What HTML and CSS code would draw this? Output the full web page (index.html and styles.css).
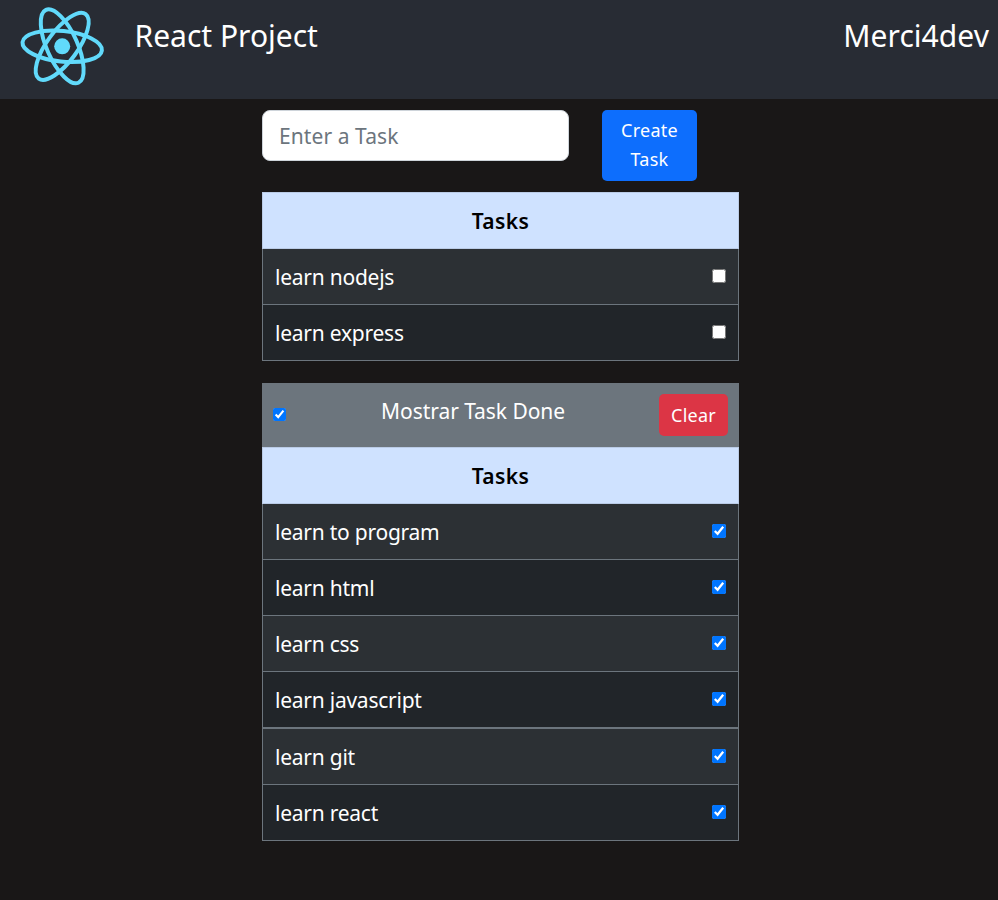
FILE: index.html
```html
<!DOCTYPE html>
<html lang="en">
<head>
<meta charset="utf-8">
<title>React Project</title>
<link rel="stylesheet" href="styles.css">
</head>
<body>
<header class="header">
  <svg class="logo" viewBox="-62.2 -46.3 124 98">
    <g fill="none" stroke="#61dafb" stroke-width="4" transform="rotate(6)">
      <ellipse rx="39.9" ry="15.3"/>
      <ellipse rx="39.9" ry="15.3" transform="rotate(60)"/>
      <ellipse rx="39.9" ry="15.3" transform="rotate(120)"/>
    </g>
    <circle r="8" fill="#61dafb"/>
  </svg>
  <h1 class="title">React Project</h1>
  <span class="user">Merci4dev</span>
</header>
<main class="container">
  <form class="form">
    <input class="field" type="text" placeholder="Enter a Task">
    <button class="btn create" type="button">Create<br>Task</button>
  </form>
  <section class="table">
    <div class="head">Tasks</div>
    <label class="row"><span>learn nodejs</span><input type="checkbox"></label>
    <label class="row"><span>learn express</span><input type="checkbox"></label>
  </section>
  <div class="bar">
    <input type="checkbox" checked>
    <span class="bar-text">Mostrar Task Done</span>
    <button class="btn clear" type="button">Clear</button>
  </div>
  <section class="table">
    <div class="head">Tasks</div>
    <label class="row"><span>learn to program</span><input type="checkbox" checked></label>
    <label class="row"><span>learn html</span><input type="checkbox" checked></label>
    <label class="row"><span>learn css</span><input type="checkbox" checked></label>
    <label class="row thick"><span>learn javascript</span><input type="checkbox" checked></label>
    <label class="row"><span>learn git</span><input type="checkbox" checked></label>
    <label class="row"><span>learn react</span><input type="checkbox" checked></label>
  </section>
</main>
</body>
</html>
```
FILE: styles.css
```css
* { box-sizing: border-box; }
body {
  margin: 0;
  height: 900px;
  overflow: hidden;
  background: #191717;
  color: #fff;
  font: 21px/32px "Noto Sans", sans-serif;
}
.header {
  display: flex;
  height: 99px;
  background: #282c34;
}
.logo { width: 124px; height: 98px; flex: none; }
.title, .user { margin: 16px 0 0; font-size: 30px; font-weight: 400; line-height: 40px; }
.title { margin-left: 10.5px; }
.user { margin-left: auto; margin-right: 9px; letter-spacing: 0.05px; }
.container { width: 477px; margin: 11px 0 0 262px; }
.form { display: flex; gap: 33px; align-items: flex-start; height: 82px; }
.field {
  width: 307px;
  height: 51px;
  padding: 0 16px;
  border: 1px solid #ced4da;
  border-radius: 8px;
  background: #fff;
  font: inherit;
  letter-spacing: 0.08px;
}
.field::placeholder { color: #6c757d; opacity: 1; }
.btn {
  padding: 0;
  border: 0;
  border-radius: 5px;
  color: #fff;
  font: 18px/29px "Noto Sans", sans-serif;
  letter-spacing: 0.25px;
}
.create { width: 95px; height: 71px; padding-bottom: 2px; background: #0d6efd; }
.head {
  height: 57px;
  border: 1px solid #bacbe6;
  background: #cfe2ff;
  color: #000;
  font-weight: 600;
  line-height: 57px;
  letter-spacing: 0.4px;
  text-align: center;
}
.row {
  display: flex;
  align-items: center;
  justify-content: space-between;
  height: 56px;
  padding: 0 12px;
  border: 1px solid #6c757d;
  border-top: 0;
  background: #212529;
  letter-spacing: -0.24px;
}
.row:nth-child(even) { background: #2c3034; }
.thick { height: 57px; border-bottom-width: 2px; }
input[type="checkbox"] { width: 14px; height: 14px; margin: 0; }
.row input[type="checkbox"] { margin-bottom: 1px; }
.bar {
  display: flex;
  height: 64px;
  margin-top: 22px;
  padding: 11px;
  background: #6c757d;
}
.bar input[type="checkbox"] { width: 13px; height: 13px; margin-top: 14px; }
.bar-text { margin: 1px 0 0 95px; letter-spacing: -0.05px; }
.clear { width: 69px; height: 42px; margin-left: auto; background: #dc3545; }
```
